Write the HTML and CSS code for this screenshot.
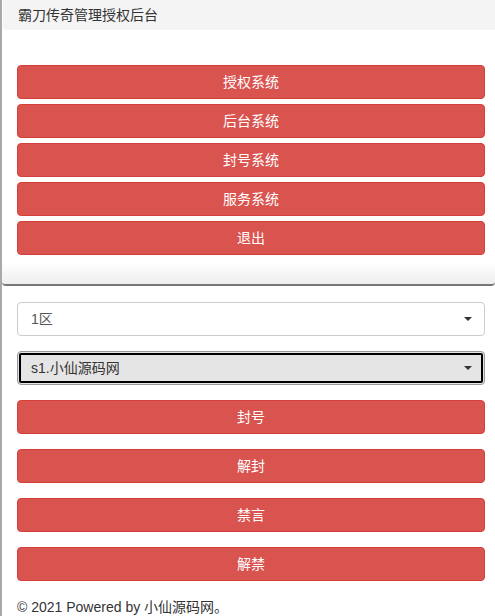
FILE: index.html
```html
<!DOCTYPE html>
<html lang="zh-CN">
<head>
<meta charset="utf-8">
<title>霸刀传奇管理授权后台</title>
<link rel="stylesheet" href="styles.css">
</head>
<body>
<div class="page">
  <section class="panel panel-top">
    <header class="panel-heading">霸刀传奇管理授权后台</header>
    <div class="panel-body">
      <button class="btn btn-danger tight">授权系统</button>
      <button class="btn btn-danger tight">后台系统</button>
      <button class="btn btn-danger tight">封号系统</button>
      <button class="btn btn-danger tight">服务系统</button>
      <button class="btn btn-danger tight">退出</button>
    </div>
  </section>
  <section class="panel panel-bottom">
    <div class="select-wrap">
      <select class="form-select"><option>1区</option></select>
      <span class="caret"></span>
    </div>
    <div class="select-wrap">
      <select class="form-select focused"><option>s1.小仙源码网</option></select>
      <span class="caret"></span>
    </div>
    <button class="btn btn-danger">封号</button>
    <button class="btn btn-danger">解封</button>
    <button class="btn btn-danger">禁言</button>
    <button class="btn btn-danger">解禁</button>
  </section>
  <footer class="footer">© 2021 Powered by 小仙源码网。</footer>
</div>
</body>
</html>
```

FILE: styles.css
```css
* { box-sizing: border-box; }
html, body { margin: 0; padding: 0; background: #fff; }
body {
  font-family: "Liberation Sans", "Noto Sans CJK SC", sans-serif;
  font-size: 14px;
  color: #333;
  width: 495px;
  height: 616px;
  overflow: hidden;
}
.page {
  border-left: 2px solid #a9a9a9;
  min-height: 616px;
}
.panel-top {
  background: linear-gradient(to bottom, #fff 0, #fff 262px, #eeeeee 284px);
  border-bottom: 2px solid #777;
  border-radius: 0 0 4px 4px;
  height: 286px;
}
.panel-heading {
  height: 30px;
  line-height: 30px;
  padding-left: 15px;
  background: #f4f4f4;
  color: #333;
  border-bottom-left-radius: 3px;
  margin-left: 1px;
}
.panel-body {
  padding: 35px 10px 0 15px;
  display: flex;
  flex-direction: column;
  gap: 5px;
}
.panel-bottom {
  padding: 16px 10px 0 15px;
  display: flex;
  flex-direction: column;
  gap: 15px;
}
.btn {
  display: block;
  width: 100%;
  height: 34px;
  margin: 0;
  padding: 0;
  font-family: inherit;
  font-size: 14px;
  line-height: 32px;
  text-align: center;
  border-radius: 4px;
  cursor: pointer;
}
.btn-danger {
  color: #fff;
  background: #d9534f;
  border: 1px solid #d43f3a;
}
.select-wrap {
  position: relative;
  height: 34px;
}
.form-select {
  -webkit-appearance: none;
  appearance: none;
  display: block;
  width: 100%;
  height: 34px;
  margin: 0;
  padding: 0 30px 0 13px;
  font-family: inherit;
  font-size: 14px;
  color: #555;
  background: #fff;
  border: 1px solid #ccc;
  border-radius: 4px;
}
.form-select.focused {
  background: #e5e5e5;
  border-color: #999;
  color: #333;
  outline: 2px solid #000;
  outline-offset: -4px;
}
.caret {
  position: absolute;
  right: 13px;
  top: 15px;
  width: 0;
  height: 0;
  border-left: 4px solid transparent;
  border-right: 4px solid transparent;
  border-top: 4px solid #333;
  pointer-events: none;
}
.footer {
  margin-top: 16px;
  padding-left: 15px;
  line-height: 20px;
  color: #333;
}
```
